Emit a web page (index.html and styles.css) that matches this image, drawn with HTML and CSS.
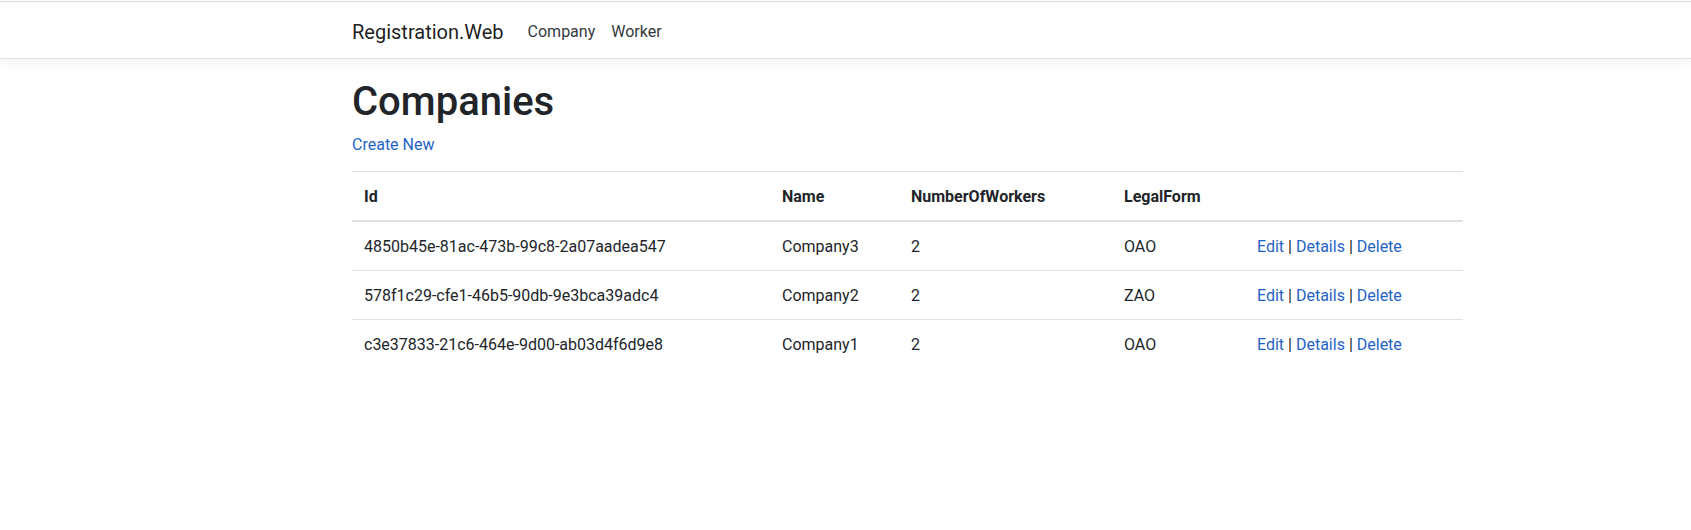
FILE: index.html
```html
<!DOCTYPE html>
<html lang="en">
<head>
<meta charset="utf-8">
<title>Index - Registration.Web</title>
<link rel="stylesheet" href="styles.css">
</head>
<body>
<header class="site-header">
  <nav class="navbar">
    <div class="container nav-inner">
      <a class="navbar-brand" href="#">Registration.Web</a>
      <ul class="navbar-nav">
        <li><a class="nav-link" href="#">Company</a></li>
        <li><a class="nav-link" href="#">Worker</a></li>
      </ul>
    </div>
  </nav>
</header>
<div class="container">
  <main class="main">
    <h1 class="title">Companies</h1>
    <p class="create"><a href="#">Create New</a></p>
    <table class="table">
      <colgroup>
        <col class="c-id"><col class="c-name"><col class="c-num"><col class="c-legal"><col class="c-act">
      </colgroup>
      <thead>
        <tr><th>Id</th><th>Name</th><th>NumberOfWorkers</th><th>LegalForm</th><th></th></tr>
      </thead>
      <tbody>
        <tr>
          <td>4850b45e-81ac-473b-99c8-2a07aadea547</td><td>Company3</td><td>2</td><td>OAO</td>
          <td><a href="#">Edit</a> | <a href="#">Details</a> | <a href="#">Delete</a></td>
        </tr>
        <tr>
          <td>578f1c29-cfe1-46b5-90db-9e3bca39adc4</td><td>Company2</td><td>2</td><td>ZAO</td>
          <td><a href="#">Edit</a> | <a href="#">Details</a> | <a href="#">Delete</a></td>
        </tr>
        <tr>
          <td>c3e37833-21c6-464e-9d00-ab03d4f6d9e8</td><td>Company1</td><td>2</td><td>OAO</td>
          <td><a href="#">Edit</a> | <a href="#">Details</a> | <a href="#">Delete</a></td>
        </tr>
      </tbody>
    </table>
  </main>
</div>
</body>
</html>
```
FILE: styles.css
```css
* { box-sizing: border-box; }
html { font-size: 16px; }
body {
  margin: 0;
  padding-top: 1px;
  font-family: Roboto, "Noto Sans", sans-serif;
  font-size: 1rem;
  line-height: 1.5;
  color: #212529;
  background: #fff;
}
a { color: #1f63c6; text-decoration: none; }

.container {
  width: 1141px;
  margin-left: 337px;
  padding: 0 15px;
}

.site-header {
  border-top: 1px solid #dcdcdc;
}
.navbar {
  background: #fff;
  border-bottom: 1px solid #dee2e6;
  box-shadow: 0 .25rem .75rem rgba(0,0,0,.05);
  padding: 8px 0;
  margin-bottom: 16px;
}
.nav-inner {
  display: flex;
  align-items: center;
}
.navbar-brand {
  font-size: 20px;
  line-height: 30px;
  padding: 7px 0 3px;
  margin-right: 16px;
  color: rgba(0,0,0,.9);
}
.navbar-nav {
  display: flex;
  list-style: none;
  margin: 0;
  padding: 0;
}
.nav-link {
  display: block;
  padding: 9.5px 8px 6.5px;
  color: #343a40;
  line-height: 24px;
}

.title {
  font-size: 40px;
  font-weight: 500;
  line-height: 1.2;
  margin: 0 0 5px;
  padding-top: 3px;
}
.create { margin: 0 0 14.5px; padding-top: 1.5px; }

.table {
  width: 1111px;
  border-collapse: collapse;
  table-layout: fixed;
}
.c-id { width: 418px; }
.c-name { width: 129px; }
.c-num { width: 213px; }
.c-legal { width: 133px; }
.c-act { width: 218px; }
.table th, .table td {
  padding: 12.5px 12px 11.5px;
  text-align: left;
  vertical-align: top;
  border-top: 1px solid #dee2e6;
  white-space: nowrap;
}
.table th {
  font-weight: 700;
  vertical-align: bottom;
  border-bottom: 2px solid #dee2e6;
}
.table tbody tr:first-child td { border-top: 0; }
```
